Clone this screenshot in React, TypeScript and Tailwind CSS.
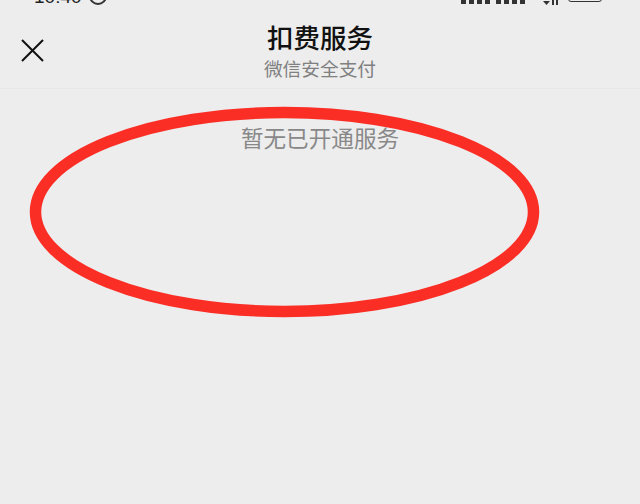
const cjk = "font-['Liberation_Sans','Noto_Sans_CJK_SC',sans-serif]";

function StatusBar() {
  return (
    <div className="flex h-[5px] items-end pl-[34px] pr-[38px] text-[#222]">
      {/* only the bottom edge of the status bar is in frame */}
      <span className="shrink-0 text-[19px] leading-[16px] font-['Liberation_Sans',sans-serif]">10:40</span>
      <span className="ml-[7px] h-[18px] w-[18px] shrink-0 rounded-full border-2 border-[#333]" />
      <div className="ml-auto mb-[1px] flex items-end gap-[3px]">
        {[0, 1, 2, 3].map((i) => (
          <span key={i} className="h-[4px] w-[5px] bg-[#333]" />
        ))}
        <span className="w-0" />
        {[0, 1, 2, 3].map((i) => (
          <span key={i} className="h-[4px] w-[5px] bg-[#333]" />
        ))}
      </div>
      <svg className="ml-[18px] shrink-0" width="16" height="5" viewBox="0 0 16 5" fill="#333">
        <path d="M0 1 H7 L3.500 5 Z" />
        <path d="M9 0 H11 V5 H9 Z M13 0 H15 V5 H13 Z" />
      </svg>
      <span className="mb-[3px] ml-[9px] h-[12px] w-[34px] shrink-0 rounded-[3px] border border-[#333]" />
    </div>
  );
}

function Header() {
  return (
    <div className="grid h-[84px] grid-cols-[1fr_auto_1fr] border-b border-[#e6e6e6]">
      <div className="pl-[21px] pt-[34px]">
        <svg width="23" height="23" viewBox="0 0 23 23" fill="none" stroke="#111" strokeWidth="2">
          <path d="M1 1 L22 22 M22 1 L1 22" />
        </svg>
      </div>
      <div className={`${cjk} flex flex-col items-center pt-[16px]`}>
        <div className="text-[26.500px] leading-[36px] font-medium text-[#111]">扣费服务</div>
        <div className="mt-[1px] text-[18.700px] leading-[24px] text-[#808080]">微信安全支付</div>
      </div>
    </div>
  );
}

export default function App() {
  return (
    <div className="relative h-[504px] w-[640px] overflow-hidden bg-[#ededed]">
      <StatusBar />
      <Header />
      <div className={`${cjk} mt-[36px] text-center text-[22.600px] leading-[30px] text-[#888]`}>暂无已开通服务</div>
      {/* hand-drawn red ellipse laid over the page */}
      <svg className="absolute left-0 top-0" width="640" height="504" fill="none">
        <ellipse cx="284.500" cy="212" rx="249" ry="99.500" stroke="#fb2e26" strokeWidth="11.500" />
      </svg>
    </div>
  );
}
